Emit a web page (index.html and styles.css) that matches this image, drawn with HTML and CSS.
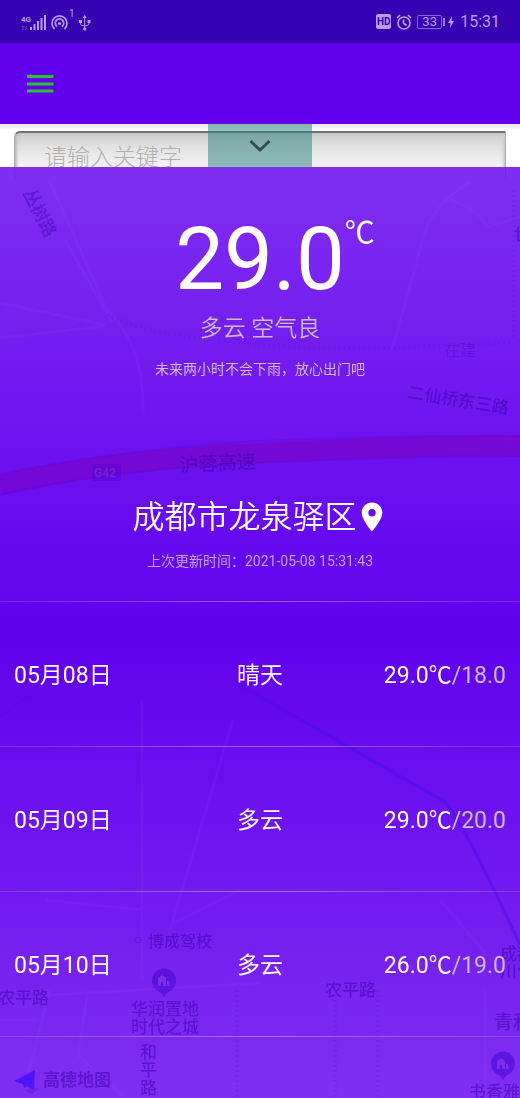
FILE: index.html
```html
<!DOCTYPE html>
<html lang="zh-CN">
<head>
<meta charset="utf-8">
<meta name="viewport" content="width=device-width, initial-scale=1">
<title>天气</title>
<link rel="stylesheet" href="styles.css">
</head>
<body>
<header class="status-bar">
  <div class="status-group">
    <svg class="status-icons" width="74" height="26" viewBox="20 8 74 26" role="img" aria-label="4G">
      <text class="net" x="21" y="21">4G</text>
      <path d="M23 25v4M22 26l1-1M26 25v4M25 28l1 1" class="thin dim"/>
      <path d="M31 26v3M34.500 23v6M38 20v9M41.500 17v12M45 14v15" class="bar"/>
      <path d="M54.500 28a7.500 7.500 0 1 1 10 0M57 25.500a4.200 4.200 0 1 1 5 0" class="line"/>
      <circle cx="59.500" cy="22.500" r="1.600" class="fill"/>
      <text class="count" x="69" y="16">1</text>
      <path d="M84.700 16v12M80.500 20v2.500q0 2.300 4.200 2.300q4.200 0 4.200-2.300V20" class="thin"/>
      <path d="M84.700 14l2 3h-4zM79 19h3v3h-3zM87.500 19h3v3h-3z" class="fill"/>
      <circle cx="84.700" cy="28" r="1.600" class="fill"/>
    </svg>
  </div>
  <div class="status-group">
    <span class="hd">HD</span>
    <svg width="16" height="16" viewBox="0 0 16 16" aria-hidden="true">
      <circle cx="8" cy="9" r="6" class="line"/>
      <path d="M7.500 5.500V9l3 2.500M1 4l3-3M15 4l-3-3" class="line"/>
    </svg>
    <span class="battery">33</span>
    <svg width="8" height="14" viewBox="0 0 8 14" aria-hidden="true"><path d="M5 1L1 8h2.500L3 13l4-7H4.500z" class="fill"/></svg>
    <time class="clock">15:31</time>
  </div>
</header>
<nav class="app-bar">
  <button class="menu" type="button" aria-label="菜单">
    <svg width="28" height="20" viewBox="0 0 28 20" aria-hidden="true"><path d="M1 2.500h26.500M1 10h26.500M1 17h26.500"/></svg>
  </button>
</nav>
<main class="stage">
  <div class="search">
    <input class="search-input" type="text" placeholder="请输入关键字" aria-label="请输入关键字">
  </div>
  <button class="pull-tab" type="button" aria-label="收起">
    <svg width="24" height="16" viewBox="0 0 24 16" aria-hidden="true"><path d="M2.500 3l9.500 9 9.500-9"/></svg>
  </button>
  <section class="panel">
    <svg class="map" viewBox="0 167 520 931" preserveAspectRatio="xMidYMin slice" aria-hidden="true">
      <path class="ghost" d="M15 167V181M505.500 167V181"/>
      <g class="road">
        <path d="M50 182L107 310Q145 345 143 415M65 240L112 322M0 303L105 325M0 338L105 326"/>
        <path d="M470 182Q425 210 420 250L392 350M443 198Q475 205 487 227L520 217"/>
        <path d="M142 700V980M240 890L170 925M45 900L142 910M50 995L260 983M50 990L28 1075M88 990L78 1055L125 1098M233 720L170 930M485 990V1098M440 900L500 970M0 1020H35"/>
      </g>
      <path class="rail" d="M107 315Q180 350 390 348L510 343M514 190V340"/>
      <path class="rail" d="M237 990V1098M335 995V1098M378 990V1098"/>
      <path class="highway" d="M0 485Q120 458 260 453Q400 446 520 445"/>
      <path class="highway-edge" d="M0 474Q120 449 260 441Q400 435 520 436M0 495Q120 468 260 463Q400 457 520 456"/>
      <path class="river" d="M240 685L445 802Q465 825 520 945"/>
      <path class="river faint" d="M0 718Q20 700 40 690"/>
      <rect class="shield" x="92" y="464" width="29" height="17" rx="2"/>
      <g class="labels">
        <text transform="translate(23 193) rotate(63)">丛树路</text>
        <text x="514" y="241">世</text>
        <text class="soft" x="444" y="356">在建</text>
        <text transform="translate(407 398) rotate(9)">二仙桥东三路</text>
        <text class="large" transform="translate(180 472) rotate(-3)">沪蓉高速</text>
        <text class="route" x="94" y="477">G42</text>
        <text class="small" x="148" y="947">博成驾校</text>
        <text x="-2" y="1004">农平路</text>
        <text x="131" y="1015">华润置地</text>
        <text x="131" y="1033">时代之城</text>
        <text x="140" y="1058">和</text>
        <text x="140" y="1076">平</text>
        <text x="140" y="1094">路</text>
        <text x="325" y="996">农平路</text>
        <text x="500" y="960">成都</text>
        <text x="500" y="977">川化</text>
        <text class="large" x="494" y="1029">青和</text>
        <text x="469" y="1098">书香雅</text>
        <text class="brand" x="43" y="1086">高德地图</text>
      </g>
      <circle class="place-dot" cx="138" cy="940" r="3"/>
      <g id="poi">
        <path class="poi" d="M164 997q-2-4-5-5.500a12 12 0 1 1 10 0q-3 1.500-5 5.500z"/>
        <path class="poi-mark" d="M158 986v-8l4-3 4 3v8h-3v-4h-2v4zM167 986v-5h2l1 5z"/>
      </g>
      <use href="#poi" x="339" y="83"/>
      <path class="plane" d="M14 1081L35 1070L34 1090L27 1086L24 1088L23 1084z"/>
      <path class="plane shade" d="M25 1090l9-3 5 2-8 5z"/>
    </svg>
    <div class="hero">
      <div class="temperature"><span class="degrees">29.0</span><span class="unit">℃</span></div>
      <p class="condition">多云 空气良</p>
      <p class="note">未来两小时不会下雨，放心出门吧</p>
      <h1 class="city">成都市龙泉驿区
        <svg width="22" height="30" viewBox="0 0 22 30" aria-hidden="true"><path fill-rule="evenodd" d="M11 0.500C5 .500.700 5 .700 10.800C.700 18 11 29.500 11 29.500S21.300 18 21.300 10.800C21.300 5 17 .500 11 .500zM11 7a3.700 3.700 0 1 1 0 7.400A3.700 3.700 0 0 1 11 7z"/></svg>
      </h1>
      <p class="updated">上次更新时间：2021-05-08 15:31:43</p>
    </div>
    <ul class="forecast">
      <li class="day"><span>05月08日</span><span>晴天</span><span class="range">29.0℃<span class="low">/18.0</span></span></li>
      <li class="day"><span>05月09日</span><span>多云</span><span class="range">29.0℃<span class="low">/20.0</span></span></li>
      <li class="day"><span>05月10日</span><span>多云</span><span class="range">26.0℃<span class="low">/19.0</span></span></li>
    </ul>
  </section>
</main>
</body>
</html>
```

FILE: styles.css
```css
* { box-sizing: border-box; }

body {
  margin: 0;
  min-height: 100vh;
  display: flex;
  flex-direction: column;
  overflow-x: hidden;
  background: #fff;
  color: #fff;
  font-family: Roboto, "Noto Sans CJK SC", sans-serif;
}

button { padding: 0; border: 0; background: none; cursor: pointer; }
p, h1, ul { margin: 0; padding: 0; }

.status-bar {
  height: 43px;
  padding: 0 20px;
  display: flex;
  align-items: center;
  justify-content: space-between;
  background: #3700b3;
  color: #b99fe3;
}
.status-group { display: flex; align-items: center; gap: 5px; }
.status-bar svg { display: block; }
.status-bar .line { fill: none; stroke: #b99fe3; stroke-width: 1.7; }
.status-bar .thin { fill: none; stroke: #b99fe3; stroke-width: 1; }
.status-bar .dim { opacity: .4; }
.status-bar .bar { stroke: #b99fe3; stroke-width: 2; }
.status-bar .fill { fill: #b99fe3; }
.net { font-size: 8px; font-weight: 700; fill: #b99fe3; }
.count { font-size: 10px; fill: #b99fe3; }
.hd {
  width: 15px;
  border-radius: 2px;
  background: #b99fe3;
  color: #3700b3;
  font-size: 10px;
  font-weight: 700;
  line-height: 15px;
  text-align: center;
}
.battery {
  position: relative;
  width: 25px;
  border: 1px solid #8465ce;
  border-radius: 2px;
  font-size: 13px;
  line-height: 12px;
  text-align: center;
}
.battery::after {
  content: "";
  position: absolute;
  left: 25px;
  top: 2px;
  width: 2px;
  height: 8px;
  background: #9d80d8;
}
.clock { font-size: 16px; line-height: 20px; }

.app-bar {
  height: 81px;
  padding: 0 26px;
  display: flex;
  align-items: center;
  background: #6200ee;
}
.menu svg { display: block; stroke: #2bc42f; stroke-width: 3; }

.stage {
  position: relative;
  flex: 1;
  display: flex;
  flex-direction: column;
  background: linear-gradient(#e4e4e4, #fff 6px);
}
.search { padding: 7px 14px 0; }
.search-input {
  display: block;
  width: 100%;
  height: 50px;
  padding: 0 29px 4px;
  border: 1px solid #aaa;
  border-top: 2px solid #707070;
  border-radius: 6px 1px 0 0;
  background: linear-gradient(#ccc, #e2e2e2 14px, #f5f5f5 36px);
  box-shadow: inset 2px 0 3px #bbb, inset -2px 0 3px #ccc;
  font: 300 23px/32px "Noto Sans CJK SC", sans-serif;
}
.search-input::placeholder { color: #b0b0b0; opacity: 1; }

.pull-tab {
  position: absolute;
  top: 0;
  left: 40%;
  width: 20%;
  height: 43px;
  background: rgba(39, 127, 122, .5);
}
.pull-tab svg {
  display: block;
  margin: 0 auto;
  fill: none;
  stroke: #3b4b4a;
  stroke-width: 3;
}

.panel {
  position: relative;
  flex: 1;
  margin-top: -14px;
  overflow: hidden;
  background: linear-gradient(#802ef2, #6100ee 50%, #802ef2);
}
.map { position: absolute; top: 0; left: 0; width: 100%; height: 100%; }
.map path { fill: none; }
.map .ghost { stroke: #6c28cf; opacity: .5; }
.map .road { stroke: #a463fa; stroke-width: 3; opacity: .08; }
.map .rail { stroke: #4c12bb; stroke-width: 4; stroke-dasharray: 2 3; opacity: .12; }
.map .highway { stroke: #7b00bb; stroke-width: 20; opacity: .5; }
.map .highway-edge { stroke: #5005cd; stroke-width: 2; opacity: .2; }
.map .river { stroke: #4b0ceb; stroke-width: 3; opacity: .5; }
.map .faint { opacity: .15; }
.map .shield { fill: #4d00ce; opacity: .3; }
.map .labels {
  fill: #3b00ae;
  opacity: .5;
  font: 500 17px "Noto Sans CJK SC", sans-serif;
}
.map .small { font-size: 16px; }
.map .large { font-size: 19px; }
.map .soft { font-size: 16px; font-weight: 400; opacity: .5; }
.map .route { font: 700 12px Roboto, sans-serif; fill: #8a38dd; }
.map .brand { font-weight: 700; }
.map .place-dot { fill: none; stroke: #5013cf; opacity: .5; }
.map .poi { fill: #4c0bd9; opacity: .65; }
.map .poi-mark { fill: #7a2fe9; }
.map .plane { fill: #4b15fa; }
.map .shade { opacity: .4; }

.hero {
  position: relative;
  height: 434px;
  padding-top: 40px;
  display: flex;
  flex-direction: column;
  align-items: center;
  text-align: center;
}
.temperature {
  width: 100%;
  display: grid;
  grid-template-columns: 1fr auto 1fr;
  align-items: start;
}
.degrees { grid-column: 2; font-size: 87px; line-height: 104px; }
.unit { justify-self: start; padding-top: 8px; font-size: 30px; line-height: 36px; }
.condition { margin-top: 2px; color: #cbbcce; font-size: 23px; font-weight: 350; line-height: 32px; }
.note { margin-top: 14px; color: #cbbcce; font-size: 14px; line-height: 20px; }
.city {
  margin-top: 116px;
  padding-right: 5px;
  display: flex;
  align-items: center;
  gap: 4px;
  font-size: 32px;
  font-weight: 350;
  line-height: 44px;
}
.city svg { fill: #fff; }
.updated { margin-top: 12px; color: #bfa5d8; font-size: 14px; line-height: 20px; }

.forecast { position: relative; list-style: none; }
.day {
  height: 145px;
  padding: 4px 14px 0;
  display: grid;
  grid-template-columns: 1fr auto 1fr;
  align-items: center;
  font-size: 23px;
  line-height: 32px;
  background: linear-gradient(90deg, rgba(220, 180, 220, .2), rgba(220, 190, 220, .5), rgba(220, 180, 220, .2)) top / 100% 1px no-repeat;
}
.day:last-child {
  height: 146px;
  padding-bottom: 1px;
  background:
    linear-gradient(90deg, rgba(220, 180, 220, .2), rgba(220, 190, 220, .5), rgba(220, 180, 220, .2)) top / 100% 1px no-repeat,
    linear-gradient(90deg, rgba(220, 180, 220, .2), rgba(220, 190, 220, .5), rgba(220, 180, 220, .2)) bottom / 100% 1px no-repeat;
}
.range { justify-self: end; }
.low { color: #cbbcce; }
```
